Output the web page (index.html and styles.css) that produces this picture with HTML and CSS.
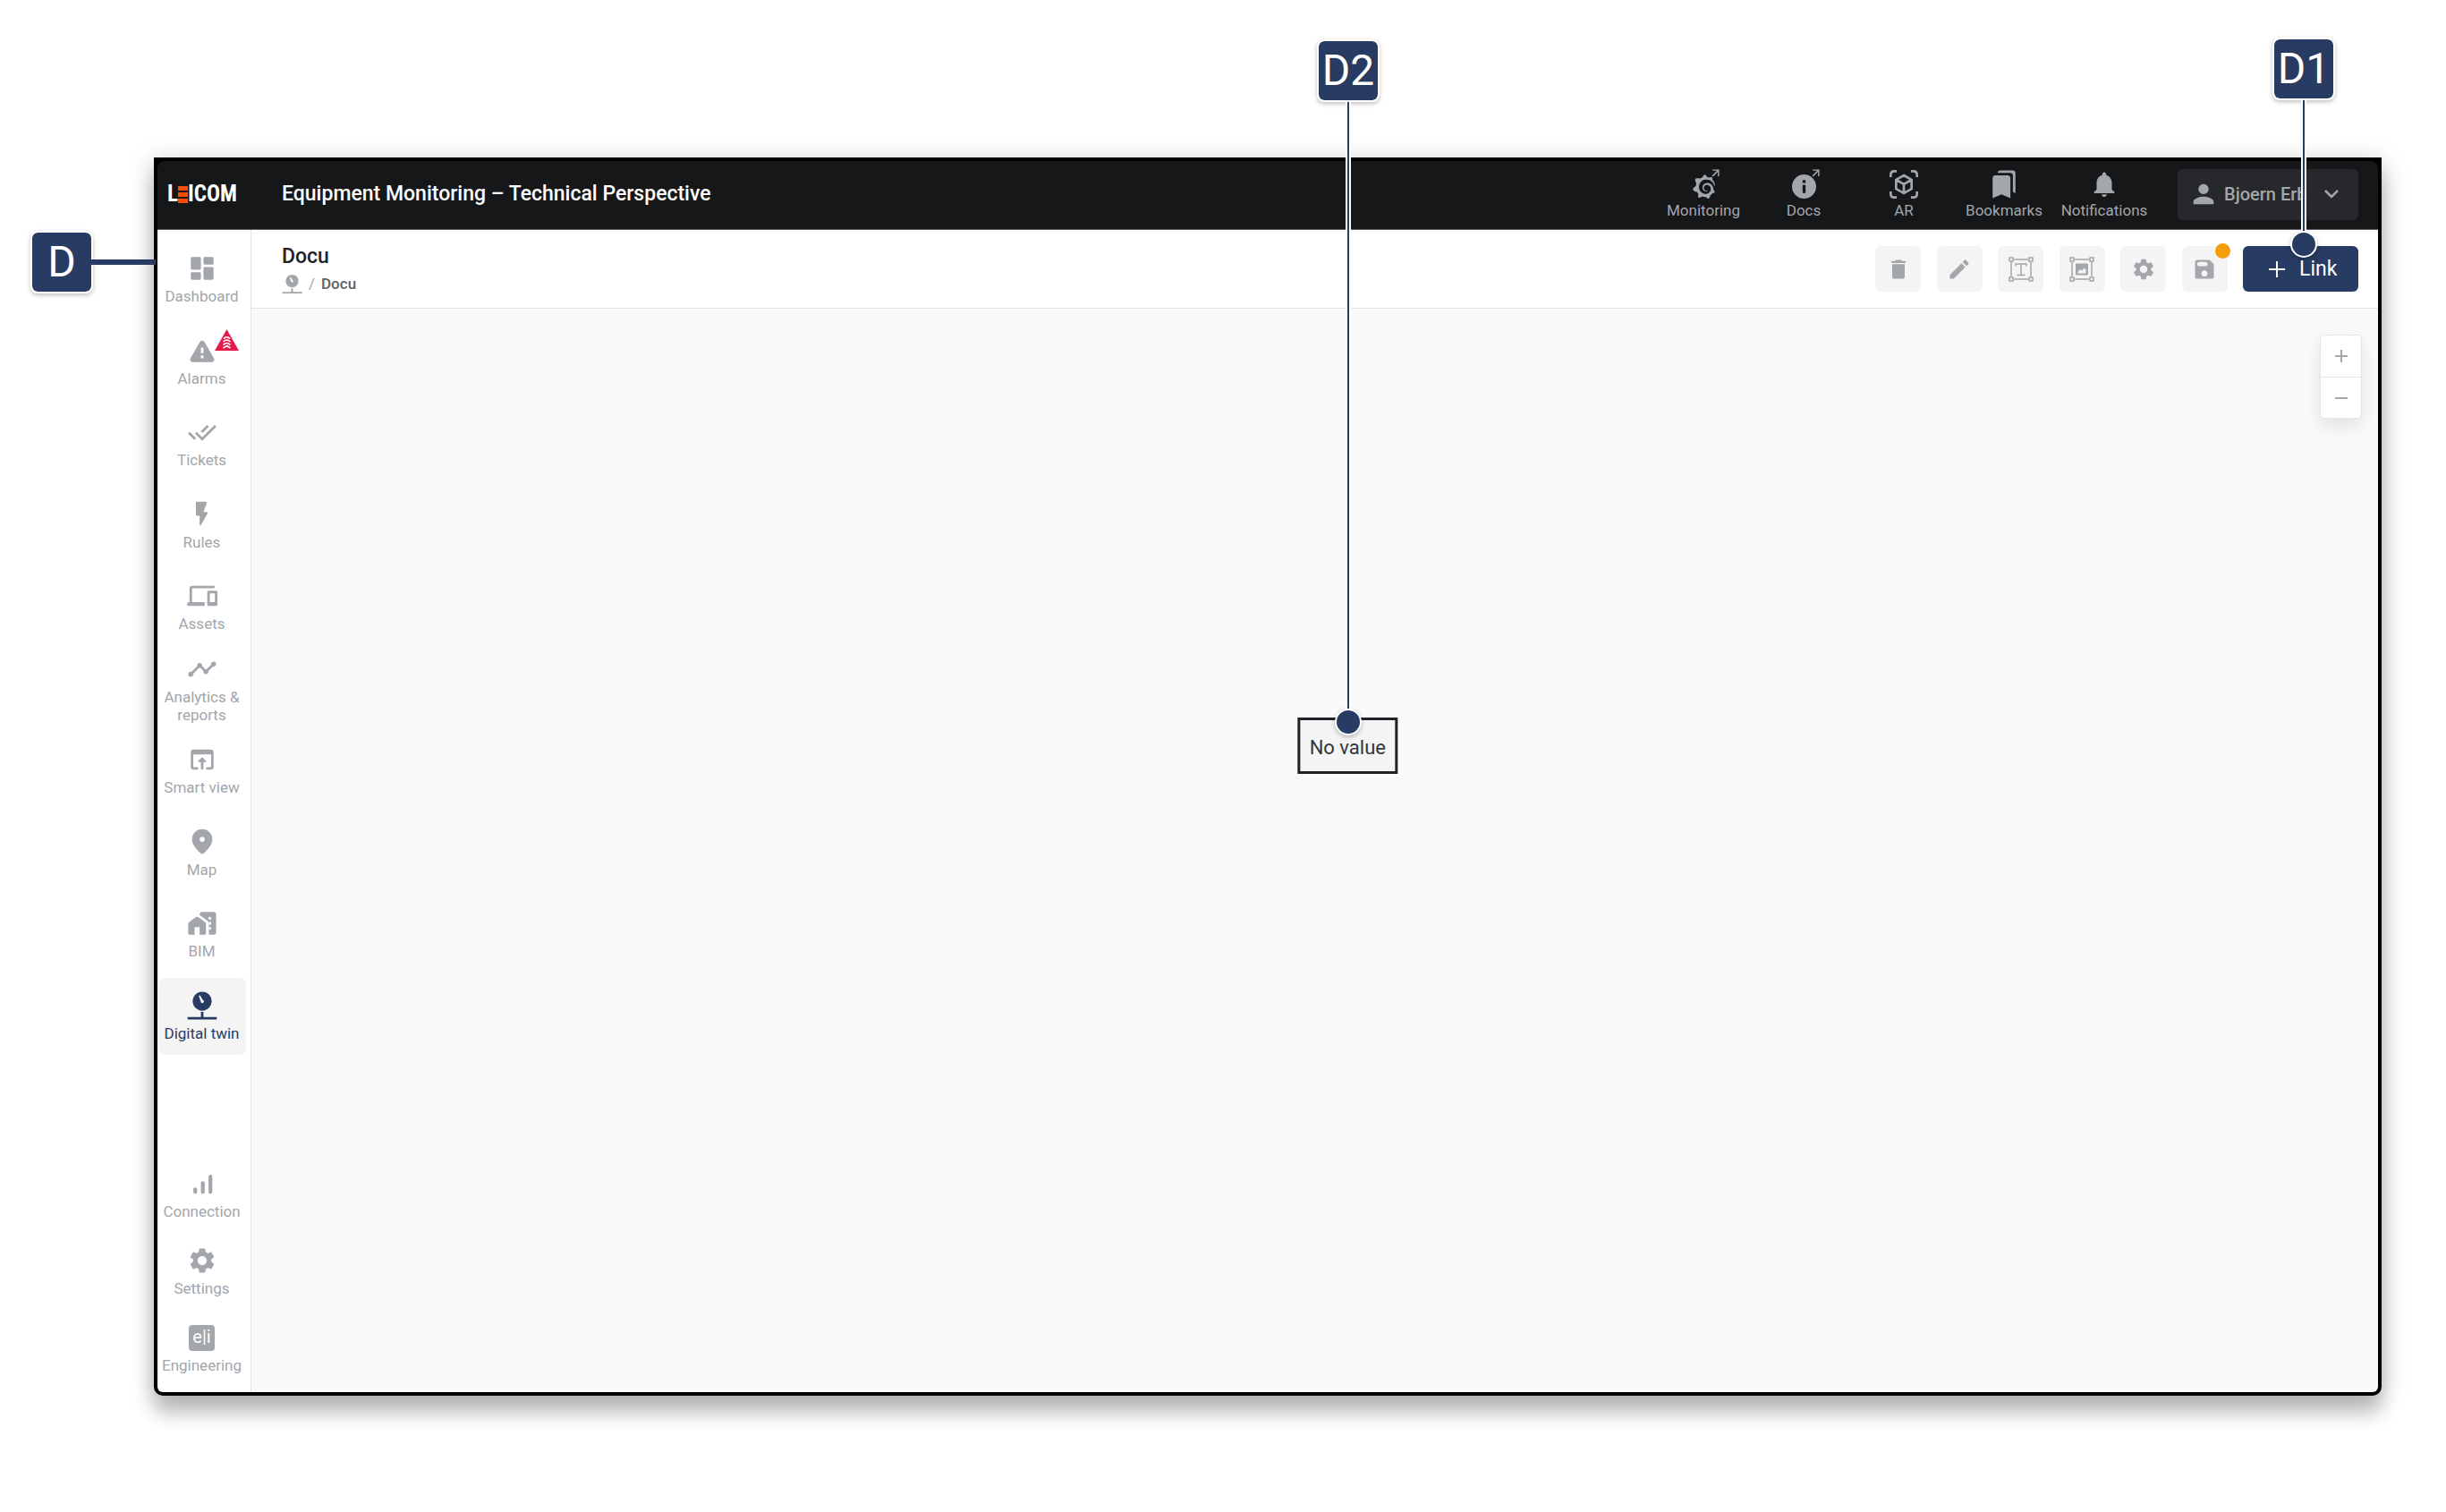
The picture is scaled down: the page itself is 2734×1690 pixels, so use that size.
FILE: index.html
```html
<!DOCTYPE html>
<html lang="en">
<head>
    <meta charset="UTF-8">
    <meta name="viewport" content="width=device-width, initial-scale=1.0">
    <title>Equipment Monitoring</title>
    <link rel="stylesheet" href="styles.css">
</head>
<body>
    <div class="page">
        <div class="window">
            <header class="header">
                <a class="logo" href="#">L<span class="logo-bars"><i></i><i></i><i></i></span>ICOM</a>
                <h1>Equipment Monitoring – Technical Perspective</h1>
                <nav class="top-nav">
                    <a href="#">
                        <span class="icon-box">
                            <svg class="icon grafana" viewBox="0 0 24 24"><path d="M23.02 10.59a8.578 8.578 0 0 0-.862-3.034 8.911 8.911 0 0 0-1.789-2.445c.337-1.342-.413-2.505-.413-2.505-1.292-.08-2.113.4-2.416.62-.052-.02-.102-.044-.154-.064-.22-.089-.446-.172-.677-.247-.231-.073-.47-.14-.711-.197a9.867 9.867 0 0 0-.875-.161C14.557.753 12.94 0 12.94 0c-1.804 1.145-2.147 2.744-2.147 2.744l-.018.093c-.098.029-.2.057-.298.088-.138.042-.275.094-.413.143-.138.055-.275.107-.41.166a8.869 8.869 0 0 0-1.557.87l-.063-.029c-2.497-.955-4.716.195-4.716.195-.203 2.658.996 4.33 1.235 4.636a11.608 11.608 0 0 0-.607 2.635C1.636 12.677.953 15.014.953 15.014c1.926 2.214 4.171 2.351 4.171 2.351.003-.002.006-.002.006-.005.285.509.615.994.986 1.446.156.19.32.371.488.548-.704 2.009.099 3.68.099 3.68 2.144.08 3.553-.937 3.849-1.173a9.784 9.784 0 0 0 3.164.501h.08l.055-.003.107-.002.103-.005.003.002c1.01 1.44 2.788 1.646 2.788 1.646 1.264-1.332 1.337-2.653 1.337-2.94v-.058c0-.02-.003-.039-.003-.06.265-.187.52-.387.758-.6a7.875 7.875 0 0 0 1.415-1.7c1.43.083 2.437-.885 2.437-.885-.236-1.49-1.085-2.216-1.264-2.354l-.065-.046c.008-.092.016-.18.02-.27.011-.162.016-.323.016-.48v-.253l-.005-.098-.008-.135a6.215 6.215 0 0 0-2.089-4.231 6.015 6.015 0 0 0-3.222-1.46 6.292 6.292 0 0 0-.85-.048l-.318.013a4.777 4.777 0 0 0-3.335 1.695c-.332.4-.592.84-.768 1.297a4.594 4.594 0 0 0-.312 1.817l.016.255a3.615 3.615 0 0 0 .698 1.82 3.53 3.53 0 0 0 1.827 1.282c.33.098.66.14.971.137.5 0 .9-.1 1.5-.477.1-.07.2-.13.163-.415a.244.244 0 0 0-.309-.06c-.3.16-.6.25-.919.26l-.4-.02a2.59 2.59 0 0 1-.724-.213 2.557 2.557 0 0 1-.667-.438 2.52 2.52 0 0 1-.805-1.475 2.306 2.306 0 0 1-.029-.444l.013-.236a3.163 3.163 0 0 1 1.352-2.29 3.12 3.12 0 0 1 .937-.43 2.946 2.946 0 0 1 .776-.101l.271.01a4.041 4.041 0 0 1 1.635.49 3.94 3.94 0 0 1 1.602 1.662 3.77 3.77 0 0 1 .397 1.414l.01.3-.01.308a6.195 6.195 0 0 1-.08.639 5.1 5.1 0 0 1-.267.927 5.31 5.31 0 0 1-.624 1.13 5.052 5.052 0 0 1-3.237 2.014 4.82 4.82 0 0 1-.649.066h-.326a6.607 6.607 0 0 1-1.716-.265 6.776 6.776 0 0 1-3.4-2.274 6.75 6.75 0 0 1-.746-1.15 6.616 6.616 0 0 1-.714-2.596l-.013-.505.003-.163c.008-.22.026-.45.054-.678a8.707 8.707 0 0 1 .28-1.355c.128-.444.286-.872.473-1.277a7.04 7.04 0 0 1 1.456-2.1 5.925 5.925 0 0 1 .953-.763c.169-.111.343-.213.524-.306.089-.05.182-.091.273-.135a7.177 7.177 0 0 1 .852-.329 7.999 7.999 0 0 1 4.9-.018 7.917 7.917 0 0 1 1.048.48 8.253 8.253 0 0 1 1.672 1.09 8.671 8.671 0 0 1 2.085 2.617c.3.6.55 1.2.74 1.877a.19.19 0 0 0 .201.142.186.186 0 0 0 .172-.184c.01-.246.002-.532-.024-.856z"/></svg>
                            <svg class="external" viewBox="0 0 8 8"><path d="M1 1h6v6M7 1 1 7"/></svg>
                        </span>
                        Monitoring
                    </a>
                    <a href="#">
                        <span class="icon-box">
                            <svg class="icon docs" viewBox="0 0 24 24"><path fill-rule="evenodd" d="M12 0a12 12 0 1 0 0 24 12 12 0 0 0 0-24zm-1.5 5.500h3v3h-3zm0 5h3v8h-3z"/></svg>
                            <svg class="external" viewBox="0 0 8 8"><path d="M1 1h6v6M7 1 1 7"/></svg>
                        </span>
                        Docs
                    </a>
                    <a href="#">
                        <span class="icon-box">
                            <svg class="icon scan" viewBox="0 0 24 24"><path d="M1 6V4q0-3 3-3h2M18 1h2q3 0 3 3v2M23 18v2q0 3-3 3h-2M6 23H4q-3 0-3-3v-2M12 4.500l6.500 3.700v7.600L12 19.500l-6.500-3.700V8.200zM5.500 8.200L12 12l6.500-3.800M12 12v7"/></svg>
                        </span>
                        AR
                    </a>
                    <a href="#">
                        <span class="icon-box">
                            <svg class="icon" viewBox="0 0 24 24"><path d="M19 18l2 1V3c0-1.100-.9-2-2-2H8.990C7.890 1 7 1.900 7 3h10c1.100 0 2 .9 2 2v13zM15 5H5c-1.100 0-2 .9-2 2v16l7-3 7 3V7c0-1.100-.9-2-2-2z"/></svg>
                        </span>
                        Bookmarks
                    </a>
                    <a href="#">
                        <span class="icon-box">
                            <svg class="icon" viewBox="0 0 24 24"><path d="M12 22c1.100 0 2-.9 2-2h-4c0 1.100.9 2 2 2zm6-6v-5c0-3.070-1.630-5.640-4.500-6.320V4c0-.83-.67-1.500-1.500-1.500s-1.500.67-1.500 1.500v.68C7.640 5.360 6 7.920 6 11v5l-2 2v1h16v-1l-2-2z"/></svg>
                        </span>
                        Notifications
                    </a>
                </nav>
                <button class="user">
                    <svg class="icon" viewBox="0 0 24 24"><path d="M12 12c2.210 0 4-1.790 4-4s-1.790-4-4-4-4 1.790-4 4 1.790 4 4 4zm0 2c-2.670 0-8 1.340-8 4v2h16v-2c0-2.660-5.330-4-8-4z"/></svg>
                    <span class="user-name">Bjoern Erb</span>
                    <svg class="chevron" viewBox="0 0 16 10"><path d="M1 1l7 7 7-7"/></svg>
                </button>
            </header>

            <div class="main">
                <aside class="sidebar">
                    <nav class="menu">
                        <a href="#">
                            <svg class="icon" viewBox="0 0 24 24"><path d="M4 13h6c.55 0 1-.45 1-1V4c0-.55-.45-1-1-1H4c-.55 0-1 .45-1 1v8c0 .55.450 1 1 1zm0 8h6c.55 0 1-.45 1-1v-4c0-.55-.45-1-1-1H4c-.55 0-1 .45-1 1v4c0 .55.450 1 1 1zm10 0h6c.55 0 1-.45 1-1v-8c0-.55-.45-1-1-1h-6c-.55 0-1 .45-1 1v8c0 .55.450 1 1 1zM13 4v4c0 .55.450 1 1 1h6c.55 0 1-.45 1-1V4c0-.55-.45-1-1-1h-6c-.55 0-1 .45-1 1z"/></svg>
                            Dashboard
                        </a>
                        <a href="#" class="alarms">
                            <svg class="icon" viewBox="0 0 24 24"><path fill-rule="evenodd" d="M4.470 21h15.060c1.540 0 2.500-1.670 1.730-3L13.730 4.990c-.77-1.330-2.690-1.330-3.460 0L2.740 18c-.77 1.330.190 3 1.730 3zM11 9.500h2V14h-2zm0 6.200h2v2.300h-2z"/></svg>
                            <svg class="alarm-badge" viewBox="0 0 27 24"><path d="M13.500 0 27 24H0z"/><path class="stripe" d="M10 10.500q3.500-3.500 7 0M9.500 14q4-4 8 0M9.500 17.500q4-4 8 0M9.500 21l4-2.500 4 2.500"/></svg>
                            Alarms
                        </a>
                        <a href="#">
                            <svg class="icon check" viewBox="0 0 24 24"><path d="M1.500 12.500l5 5M7 12.500l5 5L22.500 7M11.500 12l5-5"/></svg>
                            Tickets
                        </a>
                        <a href="#">
                            <svg class="icon" viewBox="0 0 24 24"><path d="M7 3v9c0 .55.450 1 1 1h2v7.150c0 .51.670.690.930.250l5.190-8.900c.39-.67-.09-1.500-.86-1.500H13l2.490-6.650c.25-.65-.23-1.350-.93-1.350H8c-.55 0-1 .45-1 1z"/></svg>
                            Rules
                        </a>
                        <a href="#">
                            <svg class="icon" viewBox="0 0 24 24"><path fill-rule="evenodd" d="M4 6h17c.55 0 1-.45 1-1s-.45-1-1-1H4c-1.100 0-2 .9-2 2v11h-.5c-.83 0-1.500.67-1.500 1.500S.67 20 1.500 20H14v-3H4V6zm19 2h-6c-.55 0-1 .45-1 1v10c0 .55.450 1 1 1h6c.55 0 1-.45 1-1V9c0-.55-.45-1-1-1zm-1 9h-4v-7h4v7z"/></svg>
                            Assets
                        </a>
                        <a href="#">
                            <svg class="icon" viewBox="0 0 24 24"><path d="M23 8c0 1.100-.9 2-2 2-.18 0-.35-.02-.51-.07l-3.560 3.550c.05.160.070.340.070.520 0 1.100-.9 2-2 2s-2-.9-2-2c0-.18.020-.36.070-.52l-2.550-2.550c-.16.050-.34.070-.52.070s-.36-.02-.52-.07l-4.550 4.560c.05.160.070.330.070.510 0 1.100-.9 2-2 2s-2-.9-2-2 .9-2 2-2c.18 0 .35.020.510.070l4.560-4.550C8.020 9.360 8 9.180 8 9c0-1.100.9-2 2-2s2 .9 2 2c0 .18-.02.360-.07.520l2.550 2.550c.16-.05.340-.07.520-.07s.36.020.520.070l3.550-3.560C19.020 8.350 19 8.180 19 8c0-1.100.9-2 2-2s2 .9 2 2z"/></svg>
                            Analytics &amp; reports
                        </a>
                        <a href="#">
                            <svg class="icon" viewBox="0 0 24 24"><path d="M19 4H5c-1.110 0-2 .9-2 2v12c0 1.100.890 2 2 2h3c.55 0 1-.45 1-1s-.45-1-1-1H5V8h14v10h-3c-.55 0-1 .45-1 1s.45 1 1 1h3c1.100 0 2-.9 2-2V6c0-1.100-.89-2-2-2zm-7.350 6.350l-2.790 2.790c-.32.320-.1.860.350.860H11v5c0 .55.450 1 1 1s1-.45 1-1v-5h1.790c.45 0 .67-.54.350-.85l-2.790-2.790c-.19-.2-.51-.2-.7-.01z"/></svg>
                            Smart view
                        </a>
                        <a href="#">
                            <svg class="icon" viewBox="0 0 24 24"><path fill-rule="evenodd" d="M12 2C7.800 2 4 5.220 4 10.200c0 3.180 2.450 6.920 7.340 11.230.38.330.950.330 1.330 0C17.550 17.120 20 13.380 20 10.200 20 5.220 16.200 2 12 2zm0 10c-1.100 0-2-.9-2-2s.9-2 2-2 2 .9 2 2-.9 2-2 2z"/></svg>
                            Map
                        </a>
                        <a href="#">
                            <svg class="icon" viewBox="0 0 24 24"><path fill-rule="evenodd" d="M1 12.500V20c0 .55.450 1 1 1h4v-6h4v6h4c.55 0 1-.45 1-1v-7.500c0-.65-.31-1.260-.84-1.630l-5-3.600c-.7-.5-1.630-.5-2.320 0l-5 3.600C1.310 11.240 1 11.850 1 12.500zM10 5v.5l6 4.300c.9.700 1.300 1.400 1.300 2.400v8.800H21c1.100 0 2-.9 2-2V5c0-1.100-.9-2-2-2h-9c-1.100 0-2 .9-2 2zm7 2h2v2h-2zm2 4h-1.500v2H19zm0 4h-1.500v2H19z"/></svg>
                            BIM
                        </a>
                        <a href="#" class="active">
                            <svg class="icon twin" viewBox="0 0 24 24"><path fill-rule="evenodd" d="M12 1a7.500 7.500 0 1 0 0 15 7.500 7.500 0 0 0 0-15zM9.300 4.200l1-.4 2.200 3.700a1.300 1.300 0 1 1-1.700 1.200z"/><path d="M11 17h2v4h10.500v2H.5v-2H11z"/></svg>
                            Digital twin
                        </a>
                    </nav>
                    <nav class="menu-bottom">
                        <a href="#">
                            <svg class="icon" viewBox="0 0 24 24"><path d="M6.500 20c-.83 0-1.500-.67-1.500-1.500v-2c0-.83.670-1.500 1.500-1.500S8 15.670 8 16.500v2c0 .83-.67 1.500-1.500 1.500zM12.500 20c-.83 0-1.500-.67-1.500-1.500v-7c0-.83.670-1.500 1.500-1.500s1.500.67 1.500 1.500v7c0 .83-.67 1.500-1.500 1.500zM18.500 20c-.83 0-1.500-.67-1.500-1.500v-12c0-.83.670-1.500 1.500-1.500s1.500.67 1.500 1.500v12c0 .83-.67 1.500-1.500 1.500z"/></svg>
                            Connection
                        </a>
                        <a href="#">
                            <svg class="icon" viewBox="0 0 24 24"><path d="M19.140 12.940c.04-.3.060-.61.060-.94 0-.32-.02-.64-.07-.94l2.030-1.580c.18-.14.230-.41.120-.61l-1.920-3.320c-.12-.22-.37-.29-.59-.22l-2.390.960c-.5-.38-1.030-.7-1.620-.94l-.36-2.540c-.04-.24-.24-.41-.48-.41h-3.840c-.24 0-.43.170-.47.410l-.36 2.540c-.59.240-1.130.570-1.620.940l-2.390-.96c-.22-.08-.47 0-.59.220L2.740 8.870c-.12.210-.08.470.120.610l2.030 1.580c-.05.300-.09.630-.09.940s.02.640.070.940l-2.030 1.580c-.18.140-.23.410-.12.610l1.920 3.320c.12.220.370.290.590.220l2.390-.96c.5.380 1.030.700 1.620.940l.36 2.540c.05.240.240.410.480.410h3.840c.24 0 .44-.17.470-.41l.36-2.540c.59-.24 1.130-.56 1.620-.94l2.390.960c.22.080.470 0 .59-.22l1.920-3.320c.12-.22.070-.47-.12-.61l-2.010-1.580zM12 15.600c-1.980 0-3.600-1.620-3.600-3.600s1.620-3.600 3.600-3.600 3.600 1.620 3.600 3.600-1.620 3.600-3.600 3.600z"/></svg>
                            Settings
                        </a>
                        <a href="#">
                            <span class="eli-box"><span class="eli">e|i</span></span>
                            Engineering
                        </a>
                    </nav>
                </aside>

                <main class="content">
                    <div class="toolbar">
                        <div class="heading">
                            <h2>Docu</h2>
                            <div class="breadcrumb">
                                <svg class="twin" viewBox="0 0 24 24"><path fill-rule="evenodd" d="M12 1a7.500 7.500 0 1 0 0 15 7.500 7.500 0 0 0 0-15zM9.300 4.200l1-.4 2.200 3.700a1.300 1.300 0 1 1-1.700 1.200z"/><path d="M11 17h2v4h10.500v2H.5v-2H11z"/></svg>
                                <span class="slash">/</span>
                                <a href="#">Docu</a>
                            </div>
                        </div>
                        <div class="tools">
                            <button class="tool" aria-label="Delete">
                                <svg viewBox="0 0 24 24"><path d="M6 19c0 1.100.9 2 2 2h8c1.100 0 2-.9 2-2V7H6v12zM18 4h-2.500l-.71-.71c-.18-.18-.44-.29-.7-.29H9.910c-.26 0-.52.110-.7.290L8.500 4H6c-.55 0-1 .45-1 1s.45 1 1 1h12c.55 0 1-.45 1-1s-.45-1-1-1z"/></svg>
                            </button>
                            <button class="tool" aria-label="Edit">
                                <svg viewBox="0 0 24 24"><path d="M3 17.460v3.040c0 .28.220.500.500.500h3.040c.13 0 .26-.05.350-.15L17.810 9.940l-3.750-3.750L3.150 17.100c-.1.100-.15.220-.15.360zM20.710 7.040c.39-.39.390-1.020 0-1.410l-2.340-2.340c-.39-.39-1.020-.39-1.410 0l-1.830 1.830 3.750 3.750 1.830-1.830z"/></svg>
                            </button>
                            <button class="tool" aria-label="Add text">
                                <svg class="frame" viewBox="0 0 28 28"><path d="M6 3h16M25 6v16M22 25H6M3 22V6M1 1h4v4H1zM23 1h4v4h-4zM23 23h4v4h-4zM1 23h4v4H1zM8 10.500V8h12v2.500M14 8v12.500M9.500 20.500h9"/></svg>
                            </button>
                            <button class="tool" aria-label="Add image">
                                <svg class="frame" viewBox="0 0 28 28"><path d="M6 3h16M25 6v16M22 25H6M3 22V6M1 1h4v4H1zM23 1h4v4h-4zM23 23h4v4h-4zM1 23h4v4H1z"/><path class="solid" fill-rule="evenodd" d="M8 7.500h12q1 0 1 1v11q0 1-1 1H8q-1 0-1-1v-11q0-1 1-1zM9.500 18.500h9v-4l-2-2-2.500 3-2-1.500-2.500 3z"/></svg>
                            </button>
                            <button class="tool" aria-label="Settings">
                                <svg viewBox="0 0 24 24"><path d="M19.140 12.940c.04-.3.060-.61.060-.94 0-.32-.02-.64-.07-.94l2.030-1.580c.18-.14.230-.41.120-.61l-1.920-3.320c-.12-.22-.37-.29-.59-.22l-2.390.960c-.5-.38-1.030-.7-1.620-.94l-.36-2.540c-.04-.24-.24-.41-.48-.41h-3.840c-.24 0-.43.170-.47.410l-.36 2.540c-.59.240-1.130.570-1.620.940l-2.390-.96c-.22-.08-.47 0-.59.220L2.740 8.870c-.12.210-.08.470.120.610l2.030 1.580c-.05.300-.09.630-.09.940s.02.640.070.940l-2.030 1.580c-.18.140-.23.410-.12.610l1.920 3.320c.12.220.370.290.590.220l2.390-.96c.5.380 1.030.700 1.620.940l.36 2.540c.05.240.240.410.480.410h3.840c.24 0 .44-.17.470-.41l.36-2.540c.59-.24 1.130-.56 1.620-.94l2.390.960c.22.080.470 0 .59-.22l1.920-3.320c.12-.22.070-.47-.12-.61l-2.010-1.580zM12 15.600c-1.980 0-3.600-1.620-3.600-3.600s1.620-3.600 3.600-3.600 3.600 1.620 3.600 3.600-1.620 3.600-3.600 3.600z"/></svg>
                            </button>
                            <button class="tool unsaved" aria-label="Save">
                                <svg viewBox="0 0 24 24"><path d="M17.590 3.590c-.38-.38-.89-.59-1.420-.59H5c-1.110 0-2 .9-2 2v14c0 1.100.9 2 2 2h14c1.100 0 2-.9 2-2V7.830c0-.53-.21-1.040-.59-1.410l-2.820-2.830zM12 19c-1.660 0-3-1.340-3-3s1.340-3 3-3 3 1.340 3 3-1.340 3-3 3zm1-10H7c-1.100 0-2-.9-2-2s.9-2 2-2h6c1.100 0 2 .9 2 2s-.9 2-2 2z"/></svg>
                            </button>
                        </div>
                        <button class="link-button">
                            <svg viewBox="0 0 18 18"><path d="M9 0v18M0 9h18"/></svg>
                            Link
                        </button>
                    </div>
                    <div class="canvas">
                        <div class="zoom">
                            <button aria-label="Zoom in"><svg viewBox="0 0 14 14"><path d="M7 0v14M0 7h14"/></svg></button>
                            <button aria-label="Zoom out"><svg viewBox="0 0 14 14"><path d="M0 7h14"/></svg></button>
                        </div>
                        <div class="node">No value</div>
                    </div>
                </main>
            </div>
        </div>

        <!-- callouts -->
        <div class="callout callout-d"><span class="tag">D</span><span class="arm"></span></div>
        <div class="callout callout-d2"><span class="tag">D2</span><span class="line"></span><span class="dot"></span></div>
        <div class="callout callout-d1"><span class="tag">D1</span><span class="line"></span><span class="dot"></span></div>
    </div>
</body>
</html>
```
FILE: styles.css
```css
* {
    box-sizing: border-box;
}
body {
    margin: 0;
    font-family: Roboto, sans-serif;
    font-size: 17px;
    line-height: 20px;
    background-color: #fff;
    color: #1e2329;
}
a {
    color: inherit;
    text-decoration: none;
}
button {
    font: inherit;
    border: none;
    padding: 0;
    cursor: pointer;
}
h1, h2 {
    margin: 0;
    font-size: 23px;
    font-weight: 500;
    line-height: 28px;
}
svg {
    display: block;
    flex: none;
    fill: currentColor;
}
.page {
    position: relative;
    display: flex;
    min-height: 100vh;
    padding: 176px 72px 130px 172px;
}
.window {
    flex: 1;
    display: flex;
    flex-direction: column;
    border: 4px solid #000;
    border-radius: 0 0 10px 10px;
    background-color: #000;
    box-shadow: 0 22px 20px rgba(0, 0, 0, 0.16), 0 6px 28px rgba(0, 0, 0, 0.25);
}
.icon {
    width: 34px;
    height: 34px;
}

/* header */
.header {
    display: flex;
    align-items: center;
    height: 77px;
    padding: 0 22px 2px 8px;
    border-bottom: 1px solid #5a5f66;
    border-radius: 8px 8px 0 0;
    background-color: #151719;
    color: #a3a6ab;
}
.logo {
    display: flex;
    align-items: center;
    width: 131px;
    color: #fff;
    font-family: "Roboto Condensed", "Open Sans Condensed", "Liberation Sans", sans-serif;
    font-size: 25px;
    font-weight: bold;
    padding-left: 3px;
}
.logo-bars {
    display: flex;
    flex-direction: column;
    gap: 2px;
}
.logo-bars i {
    width: 11px;
    height: 5px;
    background-color: #ff4d00;
}
.header h1 {
    color: #fff;
}
.top-nav {
    display: flex;
    margin-left: auto;
    margin-right: 26px;
}
.top-nav a {
    display: flex;
    flex-direction: column;
    align-items: center;
    gap: 2px;
    width: 112px;
}
.icon-box {
    position: relative;
    display: flex;
    align-items: center;
    justify-content: center;
    width: 34px;
    height: 34px;
}
.icon-box .grafana,
.icon-box .docs {
    width: 27px;
    height: 27px;
    margin-top: 5px;
}
.external {
    position: absolute;
    top: 0;
    right: -1px;
    width: 9px;
    height: 9px;
    fill: none;
    stroke: currentColor;
    stroke-width: 1.3;
}
.scan,
.check {
    fill: none;
    stroke: currentColor;
    stroke-width: 2;
}
.icon-box .scan {
    width: 32px;
    height: 32px;
}
.user {
    display: flex;
    align-items: center;
    width: 202px;
    height: 57px;
    padding: 0 22px 0 12px;
    border-radius: 6px;
    background-color: #27282c;
    color: #a3a6ab;
    font-size: 20px;
    font-weight: 500;
}
.user-name {
    margin-left: 6px;
}
.chevron {
    width: 16px;
    height: 10px;
    margin-left: auto;
    fill: none;
    stroke: currentColor;
    stroke-width: 2.5;
}

/* sidebar */
.main {
    flex: 1;
    display: flex;
    border-radius: 0 0 6px 6px;
    overflow: hidden;
}
.sidebar {
    display: flex;
    flex-direction: column;
    width: 105px;
    padding: 0 5px 6px 2px;
    border-right: 1px solid #e2e5e7;
    background-color: #fff;
    color: #a3a6ab;
    text-align: center;
}
.menu {
    flex: 0 0 72%;
    display: flex;
    flex-direction: column;
    justify-content: space-between;
    padding: 12px 0 9px;
}
.menu-bottom {
    margin-top: auto;
}
.sidebar a {
    position: relative;
    display: flex;
    flex-direction: column;
    align-items: center;
    justify-content: center;
    gap: 4px;
    height: 86px;
    padding-right: 2px;
    border-radius: 6px;
}
.sidebar .active {
    background-color: #f4f4f4;
    color: #283c63;
}
.alarm-badge {
    position: absolute;
    top: 7px;
    right: 8px;
    width: 27px;
    height: 24px;
    fill: #e51c4b;
}
.alarm-badge .stripe {
    fill: none;
    stroke: #fff;
    stroke-width: 1.6;
}
.eli-box {
    display: flex;
    align-items: center;
    height: 34px;
}
.eli {
    width: 29px;
    height: 29px;
    border-radius: 4px;
    background-color: #a3a6ab;
    color: #fff;
    font-size: 20px;
    line-height: 27px;
}

/* toolbar */
.content {
    flex: 1;
    display: flex;
    flex-direction: column;
}
.toolbar {
    display: flex;
    align-items: center;
    gap: 17px;
    height: 88px;
    padding: 0 22px 0 34px;
    border-bottom: 1px solid #e2e5e7;
    background-color: #fff;
}
.breadcrumb {
    display: flex;
    align-items: center;
    gap: 7px;
    margin-top: 5px;
    color: #a3a6ab;
}
.breadcrumb a {
    color: #5a5f66;
    font-weight: 500;
}
.breadcrumb svg {
    width: 23px;
    height: 23px;
}
.tools {
    display: flex;
    justify-content: space-between;
    width: 394px;
    margin-left: auto;
}
.tool {
    position: relative;
    display: flex;
    align-items: center;
    justify-content: center;
    width: 51px;
    height: 51px;
    border-radius: 6px;
    background-color: #f4f4f4;
    color: #a3a6ab;
}
.tool svg {
    width: 28px;
    height: 28px;
}
.tool .frame {
    fill: none;
    stroke: currentColor;
    stroke-width: 1.5;
}
.tool .solid {
    fill: currentColor;
    stroke: none;
}
.unsaved::after {
    content: "";
    position: absolute;
    top: -3px;
    right: -3px;
    width: 17px;
    height: 17px;
    border-radius: 50%;
    background-color: #f59e0b;
}
.link-button {
    display: flex;
    align-items: center;
    gap: 16px;
    width: 129px;
    height: 51px;
    padding-left: 29px;
    border-radius: 6px;
    background-color: #283c63;
    color: #fff;
    font-size: 23px;
}
.link-button svg {
    width: 18px;
    height: 18px;
    stroke: currentColor;
    stroke-width: 2;
}

/* canvas */
.canvas {
    position: relative;
    flex: 1;
    background-color: #fafafa;
}
.zoom {
    position: absolute;
    top: 29px;
    right: 18px;
    width: 47px;
    border: 1px solid #e2e5e7;
    border-radius: 5px;
    background-color: #fff;
    box-shadow: 0 8px 20px rgba(0, 0, 0, 0.1);
}
.zoom button {
    display: flex;
    align-items: center;
    justify-content: center;
    width: 45px;
    height: 46px;
    background: none;
    color: #a3a6ab;
}
.zoom button + button {
    border-top: 1px solid #e2e5e7;
}
.zoom svg {
    width: 14px;
    height: 14px;
    stroke: currentColor;
    stroke-width: 2;
}
.node {
    position: absolute;
    top: 37.7%;
    left: 51.55%;
    transform: translateX(-50%);
    padding: 19px 10px 14px;
    border: 3px solid #1e2329;
    background-color: #f4f4f4;
    color: #33363b;
    font-size: 22px;
    line-height: 24px;
}

/* callouts */
.callout {
    position: absolute;
    display: flex;
    align-items: center;
}
.tag {
    width: 70px;
    height: 70px;
    border: 2px solid #fff;
    border-radius: 8px;
    background-color: #283c63;
    background-clip: padding-box;
    box-shadow: 0 2px 5px rgba(0, 0, 0, 0.25);
    color: #fff;
    font-size: 48px;
    line-height: 65px;
    text-align: center;
}
.arm {
    width: 72px;
    height: 6px;
    margin-left: -2px;
    background-color: #283c63;
}
.line {
    width: 6px;
    border: 2px solid #fff;
    border-width: 0 2px;
    background-color: #283c63;
}
.dot {
    width: 30px;
    height: 30px;
    margin-top: -2px;
    border: 2px solid #fff;
    border-radius: 50%;
    background-color: #283c63;
    box-shadow: 0 2px 5px rgba(0, 0, 0, 0.25);
}
.callout-d {
    top: 258px;
    left: 34px;
}
.callout-d1,
.callout-d2 {
    flex-direction: column;
}
.callout-d1 {
    top: 42px;
    right: 124px;
}
.callout-d1 .line {
    height: 148px;
}
.callout-d2 {
    top: 44px;
    left: 53.84%;
}
.callout-d2 .line {
    height: 680px;
}
```
